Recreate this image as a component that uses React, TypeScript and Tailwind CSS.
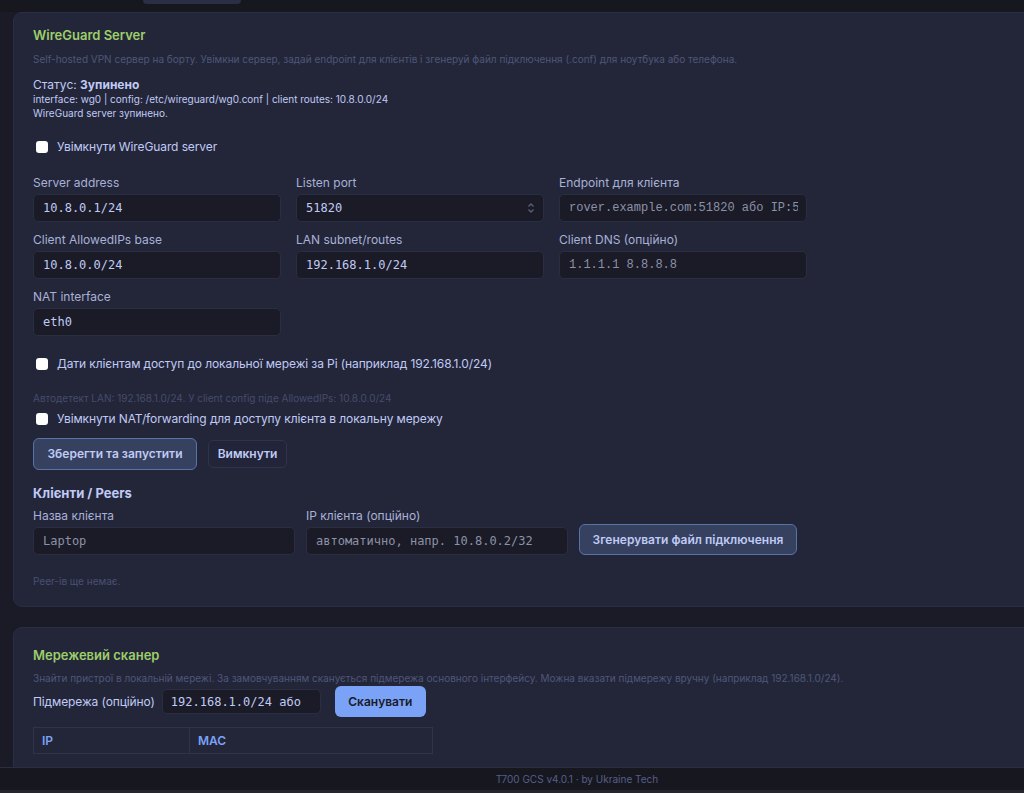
import type { ReactNode } from 'react'

const SANS = "font-['Inter','Noto_Sans',sans-serif]"
const MONO = "font-['DejaVu_Sans_Mono',monospace]"

function Checkbox({ label }: { label: string }) {
  return (
    <label className="flex items-center h-[16px] text-[12px] tracking-[-0.1px] text-[#c0caf5]">
      <span className="w-[12px] h-[12px] rounded-[3px] bg-white ml-[3px] mr-[9px]" />
      {label}
    </label>
  )
}

function Field({
  label,
  value,
  placeholder,
  courier,
  spinner,
  className = '',
}: {
  label: string
  value?: string
  placeholder?: string
  courier?: boolean
  spinner?: boolean
  className?: string
}) {
  return (
    <div className={className}>
      <div className="text-[12px] leading-[16px] text-[#a9b1d6]">{label}</div>
      <div className="mt-[3px] h-[28px] rounded-[5px] border border-[#2a2e42] bg-[#1a1b26] flex items-center pl-[9px] pr-[8px] overflow-hidden">
        <span
          className={
            (courier ? "font-['Liberation_Mono',monospace] " : MONO + ' ') +
            'text-[12px] whitespace-nowrap flex-1 overflow-hidden ' +
            (value ? 'text-[#c0caf5]' : 'text-[#8c91a8]')
          }
        >
          {value ?? placeholder}
        </span>
        {spinner && (
          <svg width="8" height="12" viewBox="0 0 8 12" className="text-[#5b607a]">
            <path d="M1.5 4.5 4 2l2.5 2.5M1.5 7.5 4 10l2.5-2.5" fill="none" stroke="currentColor" strokeWidth="1.3" />
          </svg>
        )}
      </div>
    </div>
  )
}

function Card({ children, className = '' }: { children: ReactNode; className?: string }) {
  return (
    <section
      className={
        'mr-[-40px] rounded-[9px] border border-[#2a2e44] bg-[#232639] pl-[19px] ' + className
      }
    >
      {children}
    </section>
  )
}

export default function App() {
  return (
    <div className={`${SANS} h-[793px] overflow-hidden bg-[#1a1b26] relative`}>
      {/* top strip */}
      <div className="h-[12px] bg-[#17171f] pl-[143px]">
        <div className="w-[98px] h-[4px] rounded-b-[5px] bg-[#2a2f45]" />
      </div>

      <div className="pl-[13px]">
        <Card className="pt-[13px] pb-[18px]">
          <h2 className="text-[13px] leading-[18px] font-semibold text-[#9ece6a]">WireGuard Server</h2>
          <p className="mt-[8px] text-[10px] leading-[14px] text-[#4f5679]">
            Self-hosted VPN сервер на борту. Увімкни сервер, задай endpoint для клієнтів і згенеруй файл
            підключення (.conf) для ноутбука або телефона.
          </p>
          <div className="mt-[12px] text-[12px] leading-[14px] text-[#c0caf5]">
            Статус: <b className="font-bold">Зупинено</b>
          </div>
          <div className="text-[10px] leading-[14px] text-[#c0caf5]">
            interface: wg0 | config: /etc/wireguard/wg0.conf | client routes: 10.8.0.0/24
          </div>
          <div className="text-[10px] leading-[14px] text-[#c0caf5]">WireGuard server зупинено.</div>

          <div className="mt-[19px]">
            <Checkbox label="Увімкнути WireGuard server" />
          </div>

          <div className="mt-[20px] grid grid-cols-[248px_248px_248px] gap-x-[15px] gap-y-[10px]">
            <Field label="Server address" value="10.8.0.1/24" />
            <Field label="Listen port" value="51820" spinner />
            <Field label="Endpoint для клієнта" placeholder="rover.example.com:51820 або IP:51820" courier />
            <Field label="Client AllowedIPs base" value="10.8.0.0/24" />
            <Field label="LAN subnet/routes" value="192.168.1.0/24" />
            <Field label="Client DNS (опційно)" placeholder="1.1.1.1 8.8.8.8" courier />
            <Field label="NAT interface" value="eth0" />
          </div>

          <div className="mt-[20px]">
            <Checkbox label="Дати клієнтам доступ до локальної мережі за Pi (наприклад 192.168.1.0/24)" />
          </div>
          <p className="mt-[19px] text-[10px] leading-[14px] text-[#464c6b]">
            Автодетект LAN: 192.168.1.0/24. У client config піде AllowedIPs: 10.8.0.0/24
          </p>
          <div className="mt-[6px]">
            <Checkbox label="Увімкнути NAT/forwarding для доступу клієнта в локальну мережу" />
          </div>

          <div className="mt-[11px] flex items-center gap-[11px]">
            <button className="h-[32px] w-[164px] rounded-[6px] border border-[#5873a8] bg-[#35415e] text-[12px] font-semibold text-[#c0caf5]">
              Зберегти та запустити
            </button>
            <button className="h-[28px] w-[79px] rounded-[5px] border border-[#2f3449] bg-[#22253a] text-[12px] font-semibold text-[#c0caf5]">
              Вимкнути
            </button>
          </div>

          <h3 className="mt-[14px] text-[13px] leading-[18px] font-bold text-[#c0caf5]">Клієнти / Peers</h3>
          <div className="mt-[6px] flex items-end gap-[11px]">
            <Field label="Назва клієнта" placeholder="Laptop" className="w-[262px]" />
            <Field label="IP клієнта (опційно)" placeholder="автоматично, напр. 10.8.0.2/32" className="w-[262px]" />
            <button className="h-[31px] w-[218px] rounded-[6px] border border-[#5873a8] bg-[#35415e] text-[12px] font-semibold text-[#c0caf5]">
              Згенерувати файл підключення
            </button>
          </div>
          <p className="mt-[19px] text-[10px] leading-[14px] text-[#4a5072]">Peer-ів ще немає.</p>
        </Card>

        <Card className="mt-[20px] pt-[18px] pb-[40px]">
          <h2 className="text-[13px] leading-[18px] font-semibold text-[#9ece6a]">Мережевий сканер</h2>
          <p className="mt-[7px] text-[10px] leading-[14px] text-[#4f5679]">
            Знайти пристрої в локальній мережі. За замовчуванням сканується підмережа основного інтерфейсу.
            Можна вказати підмережу вручну (наприклад 192.168.1.0/24).
          </p>
          <div className="mt-[1px] flex items-center h-[31px]">
            <span className="text-[12px] tracking-[-0.1px] text-[#c0caf5]">Підмережа (опційно)</span>
            <div className="ml-[7px] h-[25px] w-[159px] overflow-hidden rounded-[5px] border border-[#2a2e42] bg-[#1a1b26] flex items-center pl-[8px] pr-[6px]">
              <span className={`${MONO} flex-1 overflow-hidden text-[12px] whitespace-nowrap text-[#c0caf5]`}>
                192.168.1.0/24 або
              </span>
            </div>
            <button className="ml-[14px] h-[31px] w-[91px] rounded-[6px] bg-[#7aa2f7] text-[12px] font-semibold text-[#1a1b26]">
              Сканувати
            </button>
          </div>
          <div className="mt-[10px] w-[400px] grid grid-cols-[156px_1fr] border border-[#2f3449] h-[27px] text-[12px] font-semibold text-[#7aa2f7]">
            <div className="pl-[8px] flex items-center border-r border-[#2f3449]">IP</div>
            <div className="pl-[8px] flex items-center">MAC</div>
          </div>
        </Card>
      </div>

      {/* footer */}
      <footer className="absolute bottom-0 left-0 right-0 h-[26px] border-t border-[#2a2e42] bg-[#17171f] flex flex-col">
        <div className="h-[22px] flex items-center justify-center pl-[130px] text-[10px] text-[#565f89]">
          T700 GCS v4.0.1 · by Ukraine Tech
        </div>
        <div className="flex-1 bg-[#24252d]" />
      </footer>
    </div>
  )
}
